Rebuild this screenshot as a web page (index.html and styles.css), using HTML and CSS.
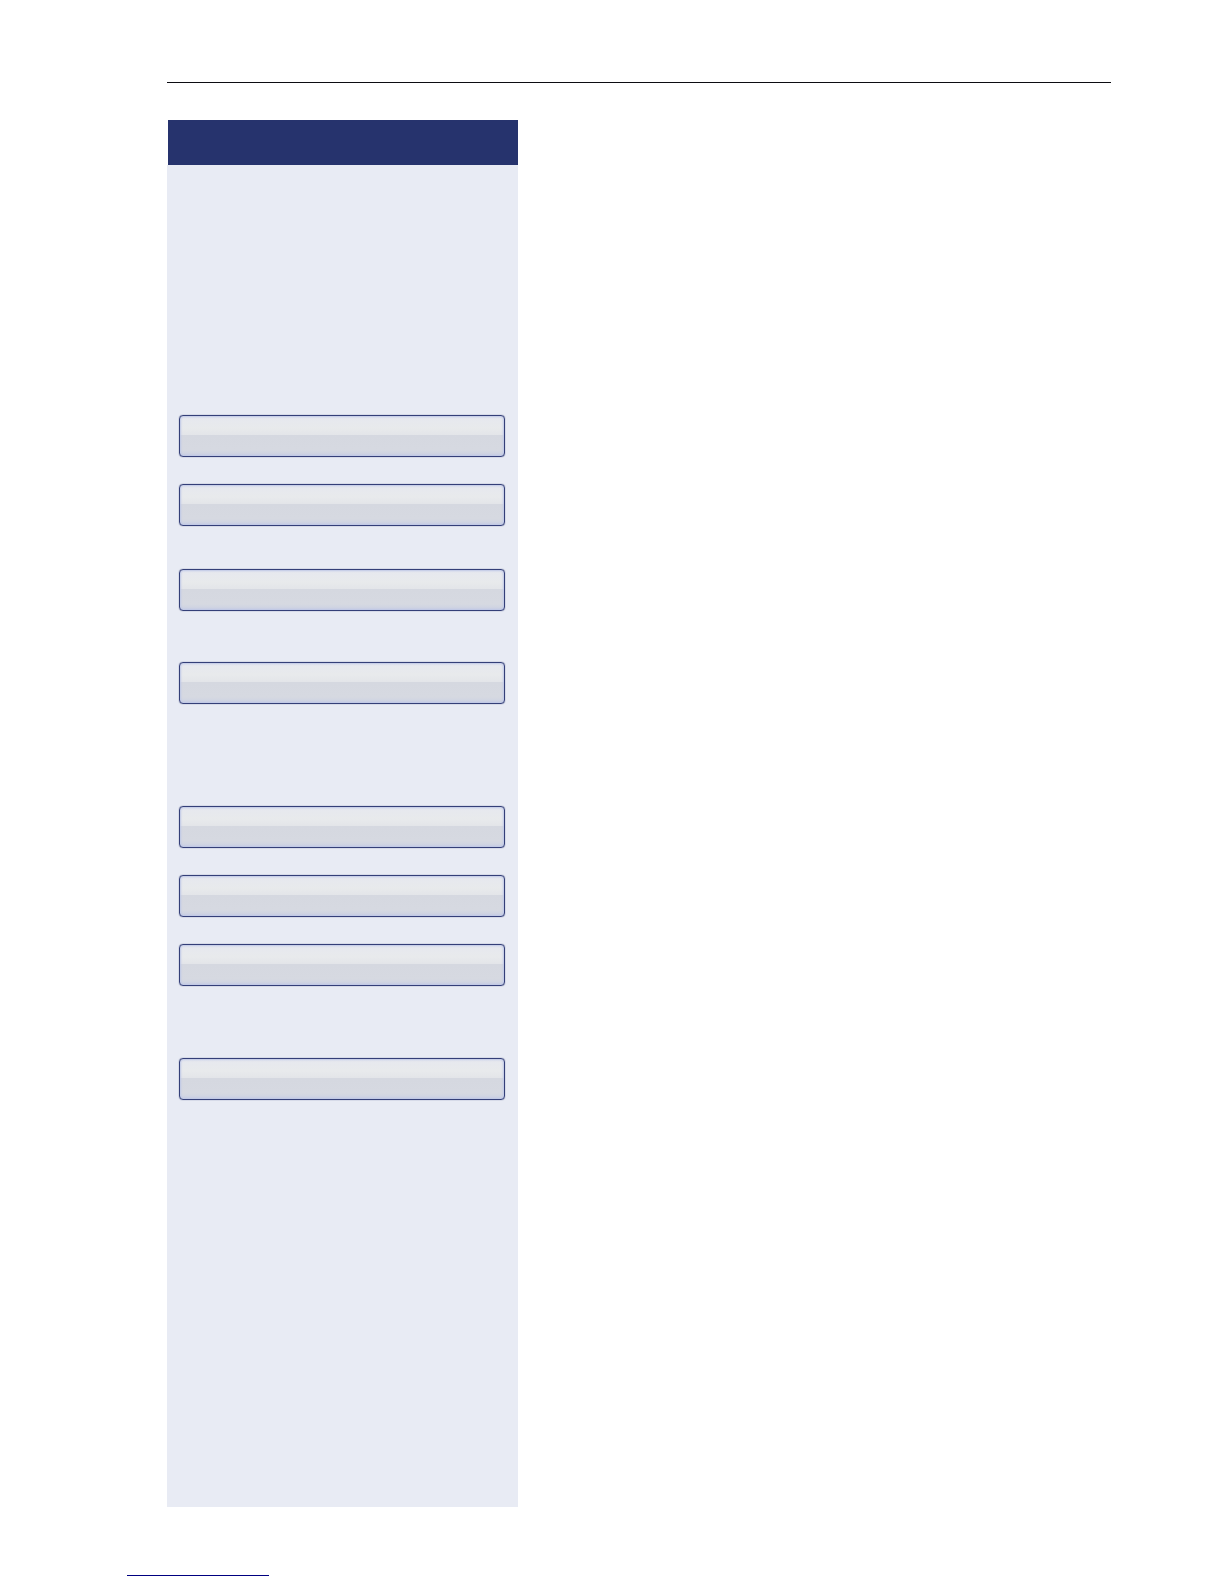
FILE: index.html
```html
<!DOCTYPE html>
<html lang="en">
<head>
<meta charset="utf-8">
<meta name="viewport" content="width=device-width, initial-scale=1">
<title>Manual page</title>
<link rel="stylesheet" href="styles.css">
</head>
<body>
<div class="page">
  <hr class="rule">
  <main class="content">
    <aside class="panel">
      <header class="panel-head"></header>
      <div class="panel-body">
        <div class="group">
          <button class="key" type="button" aria-label="Key 1"></button>
          <button class="key" type="button" aria-label="Key 2"></button>
        </div>
        <div class="group space-s">
          <button class="key" type="button" aria-label="Key 3"></button>
        </div>
        <div class="group space-m">
          <button class="key" type="button" aria-label="Key 4"></button>
        </div>
        <div class="group space-xl">
          <button class="key" type="button" aria-label="Key 5"></button>
          <button class="key" type="button" aria-label="Key 6"></button>
          <button class="key" type="button" aria-label="Key 7"></button>
        </div>
        <div class="group space-l">
          <button class="key" type="button" aria-label="Key 8"></button>
        </div>
      </div>
    </aside>
  </main>
  <footer class="footer">
    <a class="footer-link" href="#" aria-label="Back to contents"></a>
  </footer>
</div>
</body>
</html>
```
FILE: styles.css
```css
* {
  box-sizing: border-box;
}

body {
  margin: 0;
  background: #fff;
  font-family: "Liberation Sans", Arial, sans-serif;
}

.page {
  display: flex;
  flex-direction: column;
  min-height: 100vh;
  padding-top: 82px;
}

.rule {
  width: auto;
  height: 1px;
  margin: 0 113px 0 167px;
  border: 0;
  background: #0c0c12;
}

.content {
  flex: 1;
  display: grid;
  grid-template-columns: 351px 1fr;
  padding: 37px 113px 0 167px;
}

.panel {
  display: flex;
  flex-direction: column;
}

.panel-head {
  height: 45px;
  margin-left: 1px;
  background: #26336d;
}

.panel-body {
  flex: 1;
  padding: 250px 13px 48px 12px;
  background: #e8ebf4;
}

.group {
  display: flex;
  flex-direction: column;
  gap: 27px;
}

.space-s {
  margin-top: 43px;
}

.space-m {
  margin-top: 51px;
}

.space-l {
  margin-top: 72px;
}

.space-xl {
  margin-top: 102px;
}

.key {
  width: 100%;
  height: 42px;
  padding: 0;
  border: 1px solid #343f78;
  border-radius: 4px;
  background: linear-gradient(#e6e8ef 0, #e8eaec 30%, #e3e5e9 47%, #d5d8e0 48%, #d6d9e1 85%, #cbd1e3 100%);
  box-shadow: inset 0 0 2px 1px #bdc6e6, 0 0 1px #343f78;
}

.footer {
  padding: 68px 0 8px 127px;
}

.footer-link {
  display: block;
  width: 142px;
  height: 1px;
  background: #000080;
}
```
